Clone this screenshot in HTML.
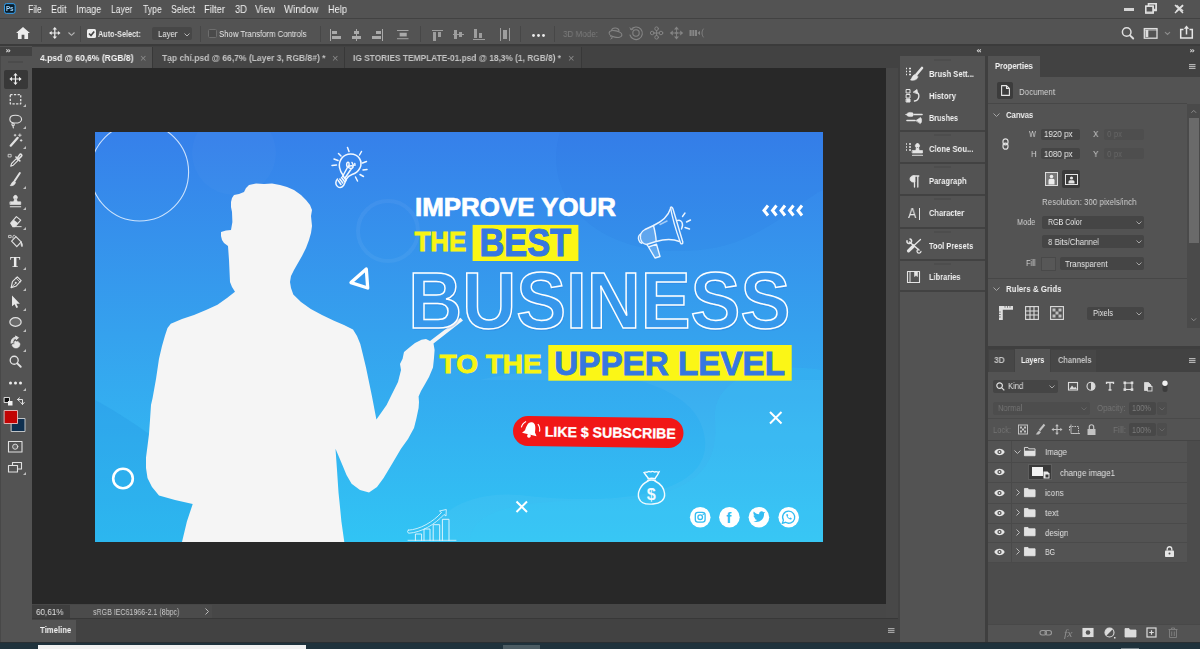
<!DOCTYPE html>
<html lang="en"><head>
<meta charset="utf-8">
<title>Photoshop</title>
<style>
*{box-sizing:border-box;margin:0;padding:0}
html,body{width:1200px;height:649px;overflow:hidden;background:#535353}
body{font-family:"Liberation Sans","DejaVu Sans",sans-serif;font-size:11px;color:#e6e6e6;position:relative}
.a{position:absolute}
.t{position:absolute;white-space:nowrap;line-height:12px;transform-origin:0 50%;transform:scaleX(.85);will-change:transform}
.b{font-weight:bold}
svg{position:absolute;overflow:visible}
#menubar{left:0;top:0;width:1200px;height:18px;background:#535353}
#menubar .t{top:3.200px;font-size:10.5px;color:#f2f2f2}
#optbar{left:0;top:18px;width:1200px;height:28px;background:#535353;border-top:1px solid #424242;border-bottom:2px solid #3b3b3b}
#tabbar{left:0;top:46px;width:898px;height:22px;background:#424242}
#tools{left:0;top:46px;width:32px;height:596px;background:#535353}
#canvas{left:32px;top:68px;width:854px;height:536px;background:#282828}
#status{left:32px;top:604px;width:856px;height:14px;background:#474747}
#timeline{left:32px;top:618px;width:866px;height:24px;background:#424242;border-top:1px solid #383838}
#taskbar{left:0;top:642px;width:1200px;height:7px;background:#1f323c;border-top:1px solid #2a2f33}
#vscroll{left:886px;top:68px;width:12px;height:550px;background:#484848}
#dock{left:0;top:0;width:0;height:0}
.fld{position:absolute;background:#454545;border-radius:2px}
.sep{position:absolute;background:#484848;height:1px}
#optbar > :not(.pg){margin-top:1.700px}
</style>
</head>
<body>
<!-- MENUBAR -->
<div id="menubar" class="a">
<svg style="left:4.300px;top:3.300px;will-change:transform" width="11.600" height="11" viewBox="0 0 12 11"><rect x="0.5" y="0.5" width="11" height="10" rx="2" fill="#0b1f2d" stroke="#31a8ff" stroke-width="1"></rect><text x="2" y="8.2" font-family="Liberation Sans,sans-serif" font-size="6.5" font-weight="bold" fill="#9fd6ff">Ps</text></svg>
<span class="t" style="left: 27.5px; transform: scaleX(0.8096);">File</span>
<span class="t" style="left: 51px; transform: scaleX(0.8566);">Edit</span>
<span class="t" style="left: 76px; transform: scaleX(0.8668);">Image</span>
<span class="t" style="left: 111px; transform: scaleX(0.8109);">Layer</span>
<span class="t" style="left: 142.5px; transform: scaleX(0.8258);">Type</span>
<span class="t" style="left: 171px; transform: scaleX(0.8291);">Select</span>
<span class="t" style="left: 204px; transform: scaleX(0.8996);">Filter</span>
<span class="t" style="left: 234.5px; transform: scaleX(0.893);">3D</span>
<span class="t" style="left: 255px; transform: scaleX(0.8858);">View</span>
<span class="t" style="left: 284px; transform: scaleX(0.9235);">Window</span>
<span class="t" style="left: 328px; transform: scaleX(0.8792);">Help</span>
<!-- window controls -->
<div class="a" style="left:1123.500px;top:8.300px;width:10.500px;height:2.400px;background:#d4d4d4"></div>
<svg style="left:1144.500px;top:3px" width="12" height="10" viewBox="0 0 12 10" fill="none" stroke="#d4d4d4" stroke-width="1.400"><rect x="0.700" y="3.200" width="7.300" height="6"></rect><path d="M3.500 3V0.700H11V6.500H8.200"></path></svg>
<svg style="left:1176px;top:4.500px" width="7.500" height="6.500" viewBox="0 0 7.500 6.500" stroke="#d4d4d4" stroke-width="1.700"><path d="M0.500 0.300L7 6.200M7 0.300L0.500 6.200"></path></svg>
</div>
<svg style="left:1145px;top:3px" width="12" height="11" viewBox="0 0 12 11" fill="none" stroke="#e0e0e0" stroke-width="1.3"><rect x="0.7" y="3.2" width="7.6" height="7"></rect><path d="M3.5 3V0.7H11.3V7.5H8.5"></path></svg>
<svg style="left:1174px;top:4px" width="10" height="10" viewBox="0 0 10 10" stroke="#e0e0e0" stroke-width="1.5"><path d="M1 1L9 9M9 1L1 9"></path></svg>

<!-- OPTIONS BAR -->
<div id="optbar" class="a">
<!-- home -->
<svg style="left:15.500px;top:6.500px" width="14" height="12" viewBox="0 0 15 13"><path d="M7.5 0L0 6.5H2V13H6V8.5H9V13H13V6.5H15Z" fill="#ececec"></path></svg>
<div class="a" style="left:41px;top:5px;width:1px;height:16px;background:#474747"></div>
<!-- move -->
<svg style="left:48.700px;top:6.500px" width="11.600" height="12" viewBox="0 0 13 15" preserveAspectRatio="none" fill="#ececec"><path d="M6.5 0L9 3H7.2V6.8H10V5L13 7.5L10 10V8.2H7.2V12H9L6.5 15L4 12H5.8V8.2H3V10L0 7.5L3 5V6.8H5.8V3H4Z"></path></svg>
<svg style="left:68px;top:11px" width="7" height="4" viewBox="0 0 7 4" fill="none" stroke="#b5b5b5" stroke-width="1.1"><path d="M0.5 0.5L3.5 3.3L6.5 0.5"></path></svg>
<div class="a" style="left:80px;top:5px;width:1px;height:16px;background:#474747"></div>
<!-- checkbox checked -->
<svg style="left:87px;top:8px" width="9" height="9" viewBox="0 0 9 9"><rect width="9" height="9" rx="1.5" fill="#ededed"></rect><path d="M2 4.5L4 6.5L7.2 2.5" stroke="#444" stroke-width="1.6" fill="none"></path></svg>
<span class="t b" style="left: 98px; top: 7px; font-size: 9.5px; color: rgb(232, 232, 232); transform: scaleX(0.7685);">Auto-Select:</span>
<div class="a" style="left:152px;top:6.800px;width:40px;height:12.700px;background:#474747;border-radius:2px"></div>
<span class="t" style="left: 158px; top: 7px; font-size: 9.5px; color: rgb(232, 232, 232); transform: scaleX(0.8205);">Layer</span>
<svg style="left:184px;top:12px" width="6" height="4" viewBox="0 0 6 4" fill="none" stroke="#b5b5b5" stroke-width="1"><path d="M0.5 0.5L3 3L5.5 0.5"></path></svg>
<div class="a" style="left:200px;top:5px;width:1px;height:16px;background:#474747"></div>
<div class="a" style="left:208px;top:8px;width:9px;height:9px;background:#4a4a4a;border:1px solid #6e6e6e;border-radius:1.5px"></div>
<span class="t" style="left: 219px; top: 7px; font-size: 9.5px; color: rgb(232, 232, 232); transform: scaleX(0.8163);">Show Transform Controls</span>
<div class="a" style="left:320px;top:5px;width:1px;height:16px;background:#474747"></div>
<!-- align icons -->
<svg style="left:330px;top:8px" width="12" height="12" viewBox="0 0 12 12" fill="#aaaaaa"><rect x="0" y="0" width="1" height="12"></rect><rect x="2" y="2" width="5" height="3"></rect><rect x="2" y="7" width="9" height="3"></rect></svg>
<svg style="left:351px;top:8px" width="11" height="12" viewBox="0 0 11 12" fill="#aaaaaa"><rect x="5" y="0" width="1" height="12"></rect><rect x="3" y="2" width="5" height="3"></rect><rect x="1" y="7" width="9" height="3"></rect></svg>
<svg style="left:371px;top:8px" width="12" height="12" viewBox="0 0 12 12" fill="#aaaaaa"><rect x="11" y="0" width="1" height="12"></rect><rect x="5" y="2" width="5" height="3"></rect><rect x="1" y="7" width="9" height="3"></rect></svg>
<svg style="left:397px;top:9px" width="11.500" height="9.200" viewBox="0 0 13 10" preserveAspectRatio="none" fill="#aaaaaa"><rect x="0" y="0" width="13" height="1"></rect><rect x="0" y="9" width="13" height="1"></rect><rect x="3" y="3" width="8" height="4"></rect></svg>
<div class="a" style="left:420px;top:5px;width:1px;height:16px;background:#474747"></div>
<svg style="left:432px;top:9px" width="11" height="11" viewBox="0 0 11 11" fill="#9d9d9d"><rect x="0" y="0" width="11" height="1"></rect><rect x="1" y="2" width="3" height="9"></rect><rect x="6" y="2" width="3" height="5"></rect></svg>
<svg style="left:453px;top:8px" width="11" height="11" viewBox="0 0 11 11" fill="#9d9d9d"><rect x="0" y="5" width="11" height="1"></rect><rect x="1" y="1" width="3" height="9"></rect><rect x="6" y="3" width="3" height="5"></rect></svg>
<svg style="left:473px;top:8px" width="12" height="11" viewBox="0 0 12 11" fill="#9d9d9d"><rect x="0" y="10" width="12" height="1"></rect><rect x="1" y="0" width="3" height="9"></rect><rect x="6" y="4" width="3" height="5"></rect></svg>
<svg style="left:500px;top:7px" width="10" height="13" viewBox="0 0 10 13" fill="#9d9d9d"><rect x="0" y="0" width="1" height="13"></rect><rect x="9" y="0" width="1" height="13"></rect><rect x="3" y="2" width="4" height="9"></rect></svg>
<div class="a" style="left:520px;top:5px;width:1px;height:16px;background:#474747"></div>
<svg style="left:532px;top:13px" width="13" height="3" viewBox="0 0 13 3" fill="#ececec"><circle cx="1.5" cy="1.5" r="1.4"></circle><circle cx="6.5" cy="1.5" r="1.4"></circle><circle cx="11.5" cy="1.5" r="1.4"></circle></svg>
<div class="a" style="left:554px;top:5px;width:1px;height:16px;background:#474747"></div>
<span class="t" style="left: 563px; top: 7px; font-size: 9.5px; color: rgb(123, 123, 123); transform: scaleX(0.8498);">3D Mode:</span>
<svg class="pg" style="left:0;top:-19px" width="1200" height="48" viewBox="0 0 1200 48" fill="none" stroke="#858585" stroke-width="1.100" stroke-linecap="round">
<!-- orbit -->
<ellipse cx="615.500" cy="34" rx="6.500" ry="3.200" transform="rotate(12 615.500 34)"></ellipse><path d="M611.500 30.500C612 27.500 618 27 619 30.500"></path><path d="M610.500 36.500L612.500 37.800L610.800 39" stroke-width="0.900"></path>
<!-- roll -->
<circle cx="636" cy="33" r="3.200"></circle><path d="M631 29.500A6.300 6.300 0 1 1 630 35"></path><path d="M630 27.800L631.200 30L633.300 29" stroke-width="0.900"></path>
<!-- pan -->
<g stroke-width="1"><circle cx="656.600" cy="28.700" r="1.800"></circle><circle cx="656.600" cy="37.300" r="1.800"></circle><circle cx="652.200" cy="33" r="1.800"></circle><circle cx="661" cy="33" r="1.800"></circle><path d="M656.600 30.500V35.500M654 33H659.200"></path></g>
<!-- slide -->
<g fill="#858585" stroke="none"><path d="M676.500 26.500L679 29.500H674Z"></path><path d="M676.500 39.500L679 36.500H674Z"></path><path d="M669.800 33L672.800 30.500V35.500Z"></path><path d="M683.200 33L680.200 30.500V35.500Z"></path><circle cx="676.500" cy="33" r="1.300"></circle></g><path d="M676.500 29.500V36.500M672.800 33H680.200" stroke-width="0.900"></path>
<!-- camera -->
<rect x="689.500" y="30" width="7.500" height="6" fill="#858585" stroke="none"></rect><path d="M697.500 33L700 30.800V35.200Z" fill="#858585" stroke="none"></path><path d="M703.300 29C701.500 31.500 701.500 34.500 703.300 37" stroke-width="0.900"></path><path d="M692 30V36M694.500 30V36" stroke="#535353" stroke-width="0.700"></path>
<!-- search -->
<circle cx="1126.700" cy="32" r="4.300" stroke="#dedede" stroke-width="1.500"></circle><path d="M1130 35.300L1133.200 38.500" stroke="#dedede" stroke-width="1.900"></path>
<!-- layout -->
<rect x="1144.300" y="28.600" width="12.700" height="9.600" stroke="#dedede" stroke-width="1.300" stroke-linecap="butt"></rect><rect x="1145.500" y="30" width="2.800" height="7" fill="#dedede" stroke="none"></rect><path d="M1144.300 30H1157" stroke="#dedede" stroke-width="0.800"></path>
<path d="M1165.300 32.300L1167.500 34.400L1169.700 32.300" stroke="#8d8d8d" stroke-width="1.100"></path>
<!-- share -->
<path d="M1183.500 29.500H1180.700V38H1192.300V29.500H1189.500" stroke="#e6e6e6" stroke-width="1.500" stroke-linecap="butt"></path><path d="M1186.500 34.500V27" stroke="#e6e6e6" stroke-width="1.500" stroke-linecap="butt"></path><path d="M1183.800 28.700L1186.500 25.500L1189.200 28.700Z" fill="#e6e6e6" stroke="none"></path>
</svg>
</div>
<!-- TAB BAR -->
<div id="tabbar" class="a">
<div class="a" style="left:32px;top:1px;width:120px;height:21px;background:#535353"></div>
<span class="t b" style="left: 40px; top: 6px; font-size: 9.5px; color: rgb(244, 244, 244); transform: scaleX(0.8965);">4.psd @ 60,6% (RGB/8)</span>
<span class="t" style="left:139.5px;top:6px;font-size:11px;color:#8a8a8a;transform:none">×</span>
<div class="a" style="left:153px;top:1px;width:428px;height:21px;background:#454545"></div>
<div class="a" style="left:152px;top:1px;width:1px;height:21px;background:#383838"></div>
<span class="t b" style="left: 162px; top: 6px; font-size: 9.5px; color: rgb(194, 194, 194); transform: scaleX(0.8962);">Tạp chí.psd @ 66,7% (Layer 3, RGB/8#) *</span>
<span class="t" style="left:331.5px;top:6px;font-size:11px;color:#8a8a8a;transform:none">×</span>
<div class="a" style="left:344px;top:1px;width:1px;height:21px;background:#383838"></div>
<span class="t b" style="left: 353px; top: 6px; font-size: 9.5px; color: rgb(194, 194, 194); transform: scaleX(0.8778);">IG STORIES TEMPLATE-01.psd @ 18,3% (1, RGB/8) *</span>
<span class="t" style="left:567.5px;top:6px;font-size:11px;color:#8a8a8a;transform:none">×</span>
<div class="a" style="left:581px;top:1px;width:1px;height:21px;background:#383838"></div>
</div>
<!-- CANVAS -->
<div id="canvas" class="a">
</div>
<!-- ARTWORK -->
<svg id="art" style="left:95px;top:132px" width="728" height="410" viewBox="95 132 728 410" font-family="Liberation Sans, sans-serif" font-weight="bold">
<defs>
<linearGradient id="bg" x1="0" y1="0" x2="0" y2="1"><stop offset="0" stop-color="#3680ea"></stop><stop offset="0.5" stop-color="#35a2ee"></stop><stop offset="1" stop-color="#31c4f4"></stop></linearGradient>
<clipPath id="cp"><rect x="95" y="132" width="728" height="410"></rect></clipPath>
</defs>
<g clip-path="url(#cp)">
<rect x="95" y="132" width="728" height="410" fill="url(#bg)"></rect>
<!-- subtle blobs -->
<circle cx="234" cy="153" r="42" fill="#ffffff" opacity="0.025"></circle>
<circle cx="388" cy="231" r="30" fill="none" stroke="#ffffff" stroke-width="4" opacity="0.05"></circle>
<path d="M560 132C540 200 600 260 700 250C760 245 800 200 823 190V132Z" fill="#1d4fc0" opacity="0.05"></path>
<path d="M95 400C150 430 200 470 260 542H95Z" fill="#1f8fe0" opacity="0.25"></path>
<path d="M480 380C560 360 700 370 705 440C710 500 600 505 520 495C460 490 430 520 430 542H823V380Z" fill="#ffffff" opacity="0.04"></path>
<path d="M470 542C470 510 520 500 600 500C690 500 720 470 715 420C712 380 760 360 823 370V542Z" fill="#38d0fa" opacity="0.16"></path>
<!-- big circle -->
<circle cx="139.6" cy="172" r="49" fill="none" stroke="#e8f2ff" stroke-width="1.1" opacity="0.85"></circle>
<!-- small circle -->
<circle cx="123" cy="478.5" r="9.8" fill="none" stroke="#ffffff" stroke-width="2.6"></circle>
<!-- PERSON -->
<path id="person" fill="#f5f5f5" d="M249 185L256 183.5L264 184L272 183.5L280 185L287 187L294 190L301 195L306 200L310 205L312 210L311 216L312 226L311 233L309 240L306 248L302 256L298 263L294 270L291 276L290 282L291 288L293.3 294.6L301 302L310.8 309L322 315L334 320.8L344 325L353 329.6L357 336L360.3 344L363 355L366 367.5L369 382L372 396.6L376.4 419.6L381 413L386.6 405L392 394L398 382L401 370L400 364L402.6 358.700L404 352L410 347L415 343L421.5 339.8L426 339L430 341L460.500 317.800L463 320.500L433.500 343.500L434.600 350L434 358L433 367.500L429 377L424.500 385L421 391L418.600 396.600L419 402L418.600 408L416.500 418L414 428L408 439L401 448.700L392 464L383.600 478L377 487L369 492.500L360 490L351.600 483.700L346.500 475L342.800 466L339 457L335.500 448.700L337 470L338.500 492.500L340 507L341.400 521.600L344.300 542L182 542L186.900 521.600L192.700 504L175 500L159 495.400L152 487L147.500 478L146 468L146 457.500L147.500 446L149 434L150 420L151 405L152.600 398L156 379L159 358.700L162 346L165 335.400L167.500 328L170.800 323.700L182 319L194 315L206 310L217.500 304.800L227 298L235 291.700L232 287L230 282L229.500 271L229 260L228.500 253L228 246L224 243L222 240L221 236L221 232L226 230.500L231 230L232.400 222L232 212L231 207L231 202L232 198L234 195L239 194L244 192L246 188Z"></path>
<!-- TEXTS -->
<text x="415.1" y="215.7" font-size="25" fill="#ffffff" stroke="#ffffff" stroke-width="0.700" textLength="200.8" lengthAdjust="spacingAndGlyphs">IMPROVE YOUR</text>
<text x="414.4" y="250.8" font-size="27" fill="#f7f414" stroke="#f7f414" stroke-width="0.800" textLength="52" lengthAdjust="spacingAndGlyphs">THE</text>
<rect x="472.6" y="224.9" width="105.8" height="36.1" fill="#fbf616"></rect>
<text x="479.5" y="256.4" font-size="38.6" fill="#3577e0" stroke="#3577e0" stroke-width="1.100" textLength="91.5" lengthAdjust="spacingAndGlyphs">BEST</text>
<text x="409.3" y="330" font-size="79.6" fill="#1e5fd0" opacity="0.18" textLength="382" lengthAdjust="spacingAndGlyphs">BUSINESS</text>
<text x="408.3" y="328.3" font-size="79.6" fill="#3b9bee" fill-opacity="0.6" stroke="#ffffff" stroke-width="1.5" textLength="382" lengthAdjust="spacingAndGlyphs">BUSINESS</text>
<text x="439.6" y="373.3" font-size="25" fill="#f7f414" stroke="#f7f414" stroke-width="0.800" textLength="102" lengthAdjust="spacingAndGlyphs">TO THE</text>
<rect x="548.3" y="345" width="243.4" height="35.7" fill="#fbf616"></rect>
<text x="554.3" y="375.3" font-size="34" fill="#3577e0" stroke="#3577e0" stroke-width="0.900" textLength="230.7" lengthAdjust="spacingAndGlyphs">UPPER LEVEL</text>
<!-- chevrons -->
<g fill="none" stroke="#ffffff" stroke-width="3" stroke-linejoin="miter"><path d="M768 205.500L764 210.500L768 215.500"></path><path d="M776.500 205.500L772.500 210.500L776.500 215.500"></path><path d="M785 205.500L781 210.500L785 215.500"></path><path d="M793.500 205.500L789.500 210.500L793.500 215.500"></path><path d="M802 205.500L798 210.500L802 215.500"></path></g>
<!-- triangle -->
<path d="M366.300 269L351 282.600L367.700 288Z" fill="none" stroke="#ffffff" stroke-width="3.300" stroke-linejoin="round"></path>
<!-- x marks -->
<path d="M770 412L781.500 423.500M781.500 412L770 423.500M516.500 501.500L527 512M527 501.500L516.500 512" stroke="#ffffff" stroke-width="2" fill="none"></path>
<!-- subscribe button -->
<g transform="rotate(0.85 598 432)">
<rect x="513" y="417" width="170.500" height="30" rx="15" fill="#f11717"></rect>
<text x="544.8" y="437.400" font-size="14.3" fill="#ffffff" stroke="#ffffff" stroke-width="0.300" textLength="131" lengthAdjust="spacingAndGlyphs">LIKE $ SUBSCRIBE</text>
<g transform="translate(530.300 431) rotate(12) scale(.93)" fill="#ffffff"><path d="M0 -8.500C-4.500 -8.500 -5 -3 -5.500 1.500L-8 5H8L5.500 1.500C5 -3 4.500 -8.500 0 -8.500Z"></path><circle cx="0" cy="6.500" r="2"></circle><path d="M-6.500 -8C-9 -6 -10 -3 -10 -0.500M6.500 -8C9 -6 10 -3 10 -0.500" fill="none" stroke="#ffffff" stroke-width="1.200"></path></g>
</g>
<!-- social -->
<g fill="#ffffff"><circle cx="700.2" cy="517.2" r="10.3"></circle><circle cx="729.400" cy="517.2" r="10.3"></circle><circle cx="758.900" cy="517.2" r="10.3"></circle><circle cx="788.700" cy="517.2" r="10.3"></circle></g>
<g fill="none" stroke="#33bdf2" stroke-width="1.300"><rect x="695.300" y="512.300" width="9.800" height="9.800" rx="2.600"></rect><circle cx="700.2" cy="517.2" r="2.300"></circle></g>
<circle cx="703.200" cy="514.300" r="0.800" fill="#33bdf2"></circle>
<text x="726.300" y="523.300" font-size="15" fill="#33bdf2">f</text>
<path d="M753.500 521.500C759.500 523.500 764.500 519 764 513.500L765.200 512L763.600 512.300C762 510.300 758.700 511.500 759.200 514.300C756.800 514.200 755 513 753.800 511.500C753 513 753.500 514.800 754.700 515.600L753.500 515.400C753.600 516.800 754.500 517.800 755.800 518.200L754.700 518.300C755.100 519.300 756 520 757.200 520.100C756.200 521 754.900 521.500 753.500 521.500Z" fill="#33bdf2"></path>
<g><path d="M788.700 511.200A6 6 0 1 1 785.600 522.300L782.400 523.300L783.400 520.200A6 6 0 0 1 788.700 511.200Z" fill="none" stroke="#33bdf2" stroke-width="1.300"></path><path d="M786.300 514.300C786 516.800 788.800 519.800 791.300 519.600L791.800 518.300L790.200 517.500L789.600 518.200C788.700 517.800 788 517.100 787.600 516.200L788.300 515.600L787.500 514Z" fill="#33bdf2"></path></g>
<!-- money bag -->
<g fill="none" stroke="#f2fbff" stroke-width="1.400" stroke-linecap="round"><path d="M648 481C640 485 637 493 639 498.500C641 504 648 504.500 653 504C660 503.500 665.500 500 664.500 493C663.800 488 660 483.500 655 481"></path><path d="M647.500 480.800C650 479.800 653 479.800 655.500 480.800M648 478.800C650.500 478 653 478 655.200 478.800"></path><path d="M648.500 478.500C646.500 476 645 474 644 472.500C645.500 471.500 646.800 472.800 648 471.800C649.200 470.800 650 472.500 651.500 471.600C652.800 470.800 654 472.500 655.300 471.800C656.500 471.200 657.500 472.500 659 472C658 474.500 656.500 476.500 655 478.500"></path></g>
<text x="646.800" y="499.500" font-size="16" fill="#f2fbff" textLength="9" lengthAdjust="spacingAndGlyphs">$</text>
<!-- bulb -->
<g fill="none" stroke="#f2f8ff" stroke-width="1.500" stroke-linecap="round"><path d="M343.500 176C339.500 171 337.500 164 341.500 158.500C346 152.500 355.500 152.500 359.500 158.500C363.500 165 359 172.500 352 174.500C349 175.500 347.500 177 345.800 179.800"></path><path d="M343.300 176.200L346 180M341.500 177.500L344.500 181.500M339.800 179L342.800 183M338.200 180.500L341 184.500"></path><path d="M337.500 179C335.500 181 335 184.500 337.500 186.500C339.500 188 342 187.500 343.500 185.500L346.200 180"></path><path d="M342.500 176.500L348 166.500M345 178L351.500 168.500M347.200 166.800C346 164.500 346.800 162 348.200 162.300C349.500 162.600 349.300 165 348.300 166.800C350.500 165 353.500 165.500 353 167.200C352.500 168.800 350 168.800 348.500 167.500M352 162.500L353.500 165.500M354.800 163.500L355 165.300"></path><path d="M347.500 147.500L349 151.500M338.500 153.500L341 156M334 159L338 160.500M332 165.500L336.500 165M361.500 151.500L359.500 155M366.500 161.500L362.500 163M367 169.500L363 170M363.500 176.500L360 174.500M357.500 181L355.500 177"></path></g>
<!-- megaphone -->
<g fill="none" stroke="#eaf4ff" stroke-width="1.400" stroke-linecap="round" stroke-linejoin="round"><path d="M670.500 207.500C671.500 206.500 672.500 207.500 673 209L682.800 242C683 244 681.500 244.500 680.500 243C676.500 232 672.500 219 670.500 207.500Z"></path><path d="M670.500 208.500C668 217 660 222.500 653.500 225.500L645 229.500C641.500 231.500 640 234.500 640.500 238C641 241.500 643 244 646.500 244.500L656 241.500C663 239.500 672 238.500 679.500 241.500"></path><path d="M653.500 225.500C655 231.500 656 236.500 656.200 241.500"></path><path d="M640.500 234C638.500 235.500 638 238 639 240.500C639.500 242 640.500 243 641.800 243.200"></path><path d="M647 244.500L648.500 247L656.500 244.200M648.500 247L655 258L660 256.500L656.500 244.200"></path><path d="M677.500 220.500C681.500 219 684 224 681.500 229"></path><path d="M682.500 216.500L685 213M686.500 222L690.500 220M685 227.500L689.500 229"></path><path d="M660 224.500L667 221" stroke-opacity="0.6"></path></g>
<g fill="#ffffff" opacity="0.22"><path d="M645 229.500L653.500 225.500C655 231.500 656 236.500 656.200 241.500L646.500 244.500C641 243 639 234 645 229.500Z"></path><path d="M648.500 247L656.500 244.200L660 256.500L655 258Z"></path></g>
<!-- chart -->
<g fill="none" stroke="#e8f8ff" stroke-width="1" opacity="0.92" stroke-linecap="round" stroke-linejoin="round"><path d="M415.400 540.500V534H421.600V540.500M424 540.500V529H430V540.500M433.200 540.500V524.700H439.700V540.500M442.400 540.500V519.300H449V540.500"></path><path d="M408 540.300H456" stroke-width="0.800"></path><path d="M408.300 530.200C420 529.500 433 522 441.500 512.500L439.500 511L446.300 509.500L446 516L444 514.500C435 524.500 421 532.500 409 533.200C407.300 533.200 407 530.400 408.300 530.200Z" stroke-width="0.900"></path></g>
</g>
</svg>
<!-- TOOLS -->
<div id="tools" class="a">
<div class="a" style="left:0;top:1px;width:32px;height:9px;background:#424242"></div>
<svg style="left:5.800px;top:3.200px" width="4.200" height="3.500" viewBox="0 0 6 5" fill="none" stroke="#d8d8d8" stroke-width="1.500"><path d="M0.500 0.500L2.500 2.500L0.500 4.500M3.500 0.500L5.500 2.500L3.500 4.500"></path></svg>
<div class="a" style="left:8px;top:15px;width:15px;height:2px;background:#4b4b4b"></div>
<!-- active tool -->
<div class="a" style="left:4px;top:24px;width:24px;height:19px;background:#383838;border-radius:2px"></div>
<svg style="left:0;top:0" width="32" height="440" viewBox="0 46 32 440" fill="none" stroke="#e2e2e2" stroke-width="1.300" stroke-linecap="round" stroke-linejoin="round">
<!-- move 79 -->
<g transform="translate(15.5 79.0) scale(0.87) translate(-15.5 -79.0)"><path d="M15.500 72L18 75H16.200V78.300H19.500V76.500L22.500 79L19.500 81.500V79.700H16.200V83H18L15.500 86L13 83H14.800V79.700H11.500V81.500L8.500 79L11.500 76.500V78.300H14.800V75H13Z" fill="#f0f0f0" stroke="none"></path></g>
<!-- marquee 99.500 -->
<g transform="translate(15.5 99.5) scale(0.87) translate(-15.5 -99.5)"><rect x="9.500" y="94" width="12" height="10.500" stroke-dasharray="2.600 1.600" stroke-linecap="butt" stroke-width="1.500"></rect></g>
<!-- lasso 120 -->
<g transform="translate(15.5 120.0) scale(0.87) translate(-15.5 -120.0)"><path d="M15.500 114.500C19.500 114.500 22.500 116.500 22.500 119C22.500 121.500 19.500 123.500 15.500 123.500C11.500 123.500 9 121.500 9 119C9 116.500 11.500 114.500 15.500 114.500Z"></path><path d="M12.500 123C11 124 11 126 12.500 126.500C14 127 14.500 125 13.500 124M12.500 126.500L13 129"></path></g>
<!-- wand 140 -->
<g transform="translate(15.5 140.0) scale(0.87) translate(-15.5 -140.0)"><path d="M10 146.500L18 137.500" stroke-width="2.600"></path><path d="M20.500 133V136M19 134.500H22M22 139.500V141.500M21 140.500H23M15 133.500V135.500M14 134.500H16" stroke-width="1"></path></g>
<!-- eyedropper 160 -->
<g transform="translate(15.5 160.0) scale(0.87) translate(-15.5 -160.0)"><path d="M10 167L11 164L16.500 158.500L18.500 160.500L13 166Z"></path><path d="M16 156.500L20.500 161M17.500 158L20.500 153.500C21.500 152.500 23.500 154.500 22.500 155.500L19 159" stroke-width="1.800"></path><path d="M7.500 153.500H10.500V156.500H7.500Z" stroke-width="0.900"></path></g>
<!-- brush 180 -->
<g transform="translate(15.5 180.0) scale(0.87) translate(-15.5 -180.0)"><path d="M20.500 172L14.500 181" stroke-width="2.200"></path><path d="M13.500 181.500C11.500 182 11 184.500 9.500 186.500C12.500 187 15 185.500 15.500 183Z" fill="#e2e2e2" stroke-width="0.800"></path></g>
<!-- stamp 201 -->
<g transform="translate(15.5 201.0) scale(0.87) translate(-15.5 -201.0)"><path d="M15.500 194.500A2.300 2.300 0 1 1 15.400 194.500M14.500 198.500L13.500 202H17.500L16.500 198.500M9.500 202H21.500V205H9.500Z" fill="#e2e2e2" stroke-width="0.800"></path><path d="M9.500 207.500H21.500" stroke-width="1.200"></path></g>
<!-- eraser 221 -->
<g transform="translate(15.5 221.0) scale(0.87) translate(-15.5 -221.0)"><path d="M10 223.500L16.500 216L21.500 220L15 227.500H12.500Z"></path><path d="M13.500 219.500L18.500 223.500L15 227.500H12.500L10 223.500Z" fill="#e2e2e2" stroke="none"></path><path d="M16 227.500H22" stroke-width="1.100"></path></g>
<!-- bucket 241.500 -->
<g transform="translate(15.5 241.5) scale(0.87) translate(-15.5 -241.5)"><path d="M11 241L16 236L22 242L17 247.500Z"></path><path d="M16 236C14.500 233.500 12 233.500 12.500 237.500" stroke-width="1"></path><path d="M22 242C23.500 244 24 246 23 247.500C22 246.500 21.500 244.500 22 242Z" fill="#e2e2e2" stroke-width="0.800"></path><path d="M8 234.500H10.500V237H8Z" stroke-width="0.900"></path></g>
<!-- pen 282 -->
<g transform="translate(15.5 282.0) scale(0.87) translate(-15.5 -282.0)"><path d="M10.500 288.500L12 281.500L17.500 276L22 280.500L16.500 286.500Z"></path><path d="M10.500 288.500L15 284" stroke-width="1"></path><circle cx="15.800" cy="283" r="1.200" fill="#e2e2e2" stroke="none"></circle><path d="M16 277.500L20.500 282" stroke-width="1"></path></g>
<!-- arrow 302 -->
<g transform="translate(15.5 302.0) scale(0.87) translate(-15.5 -302.0)"><path d="M11.500 294.500V307L14.500 304.500L16.500 309L18.500 308L16.500 304H20.500Z" fill="#e8e8e8" stroke="none"></path></g>
<!-- ellipse 322 -->
<g transform="translate(15.5 322.0) scale(0.87) translate(-15.5 -322.0)"><ellipse cx="15.500" cy="322" rx="6.500" ry="5" fill="#6a6a6a" stroke-width="1.400"></ellipse></g>
<!-- hand/rotate 342 -->
<g transform="translate(15.5 342.0) scale(0.87) translate(-15.5 -342.0)"><path d="M10.500 343.500C10 339 13 336.500 16 336.500L15.500 335L19 337L16.500 339.500L16.300 338C14 338 12 340 12.500 343" stroke-width="1" fill="#e2e2e2"></path><path d="M12 346.500C11 344.500 13 343.500 14 345L14.500 341.500C15 340.500 16.500 341 16.300 342L17.500 341.500C18.500 341 19.500 342 19 343C20.500 342.500 21 344 20.500 345.500C20 348 18 349 16 349C14 349 13 348 12 346.500Z" fill="#e2e2e2" stroke-width="0.600"></path></g>
<!-- zoom 362 -->
<g transform="translate(15.5 362.0) scale(0.87) translate(-15.5 -362.0)"><circle cx="14" cy="360" r="4.600" stroke-width="1.500"></circle><path d="M17.500 363.500L21.500 367.500" stroke-width="2.200"></path></g>
<!-- dots 383 -->
<g fill="#ececec" stroke="none"><circle cx="10.500" cy="383" r="1.500"></circle><circle cx="15.500" cy="383" r="1.500"></circle><circle cx="20.500" cy="383" r="1.500"></circle></g>
<!-- small corner triangles -->
<g fill="#bdbdbd" stroke="none"><path d="M26 104v3h-3z"></path><path d="M26 126v3h-3z"></path><path d="M26 146v3h-3z"></path><path d="M26 186v3h-3z"></path><path d="M26 207v3h-3z"></path><path d="M26 227v3h-3z"></path><path d="M26 267v3h-3z"></path><path d="M26 288v3h-3z"></path><path d="M26 308v3h-3z"></path><path d="M26 329v3h-3z"></path><path d="M26 349v3h-3z"></path><path d="M26 388v3h-3z"></path><path d="M26 472v3h-3z"></path></g>
<!-- default colors / swap -->
<rect x="4.500" y="397.500" width="5" height="5" fill="#111" stroke="#e8e8e8" stroke-width="0.900"></rect><rect x="8" y="401" width="4.500" height="4.500" fill="#f0f0f0" stroke="none"></rect>
<path d="M18.500 399.500H22.500V403.500M17.500 399.500L19.500 397.800M17.500 399.500L19.500 401.200M22.500 404.500L20.800 402.500M22.500 404.500L24.200 402.500" stroke-width="1"></path>
<!-- bg/fg -->
<rect x="11.500" y="418.500" width="13.500" height="13" fill="#0e2f4f" stroke="#bfc3c6" stroke-width="1"></rect>
<rect x="4.500" y="410.500" width="13" height="13" fill="#c30404" stroke="#e0b0b0" stroke-width="1"></rect>
<!-- quick mask -->
<rect x="8.500" y="441.500" width="13.500" height="10.500" stroke-width="1.100"></rect><circle cx="15.200" cy="446.700" r="2.600" fill="#666" stroke-width="0.900"></circle>
<!-- screen mode -->
<rect x="12.500" y="462.500" width="9" height="6.500" stroke-width="1.100"></rect><rect x="8.500" y="465.500" width="9" height="6.500" fill="#535353" stroke-width="1.100"></rect>
</svg>
<span class="t b" style="left:10.200px;top:206.300px;font-size:15.500px;line-height:20px;font-family:'Liberation Serif',serif;color:#ececec;transform:none">T</span>
</div>
<div class="a" style="left:0;top:56px;width:1px;height:586px;background:#484848"></div>
<!-- STATUS -->
<div id="status" class="a">
<div class="a" style="left:0;top:1px;width:38px;height:13px;background:#3e3e3e"></div>
<div class="a" style="left:38px;top:1px;width:142px;height:13px;background:#4b4b4b"></div>
<span class="t" style="left: 4.3px; top: 1.5px; font-size: 9.5px; color: rgb(224, 224, 224); transform: scaleX(0.8531);">60,61%</span>
<span class="t" style="left: 60.5px; top: 1.5px; font-size: 9.5px; color: rgb(201, 201, 201); transform: scaleX(0.7429);">sRGB IEC61966-2.1 (8bpc)</span>
<svg style="left:173px;top:4px" width="4" height="7" viewBox="0 0 4 7" fill="none" stroke="#bdbdbd" stroke-width="1"><path d="M0.500 0.500L3.500 3.500L0.500 6.500"></path></svg>
</div>
<div id="vscroll" class="a"></div>
<!-- TIMELINE -->
<div id="timeline" class="a">
<div class="a" style="left:0;top:1px;width:44px;height:23px;background:#535353"></div>
<span class="t b" style="left: 7.5px; top: 4.8px; font-size: 9.5px; color: rgb(244, 244, 244); transform: scaleX(0.8156);">Timeline</span>
<svg style="left:856px;top:9.300px" width="6.500" height="5" viewBox="0 0 6.500 5" stroke="#a4a4a4" stroke-width="1.100"><path d="M0 0.600H6.500M0 2.500H6.500M0 4.400H6.500"></path></svg>
</div>
<!-- DOCK -->
<div id="dock" class="a">
<div class="a" style="left:898px;top:46px;width:302px;height:596px;background:#535353"></div>
<div class="a" style="left:898px;top:46px;width:302px;height:10px;background:#424242"></div>
<div class="a" style="left:898px;top:46px;width:2px;height:596px;background:#424242"></div>
<div class="a" style="left:985px;top:56px;width:3px;height:586px;background:#3f3f3f"></div>
<svg style="left:976.800px;top:49px" width="4.200" height="3.500" viewBox="0 0 6 5" fill="none" stroke="#d0d0d0" stroke-width="1.500"><path d="M2.500 0.500L0.500 2.500L2.500 4.500M5.500 0.500L3.500 2.500L5.500 4.500"></path></svg>
<svg style="left:1190px;top:49px" width="4.200" height="3.500" viewBox="0 0 6 5" fill="none" stroke="#d0d0d0" stroke-width="1.500"><path d="M0.500 0.500L2.500 2.500L0.500 4.500M3.500 0.500L5.500 2.500L3.500 4.500"></path></svg>
<div class="a" style="left:900px;top:130px;width:85px;height:2px;background:#424242"></div>
<div class="a" style="left:900px;top:162px;width:85px;height:2px;background:#424242"></div>
<div class="a" style="left:900px;top:194px;width:85px;height:2px;background:#424242"></div>
<div class="a" style="left:900px;top:227px;width:85px;height:2px;background:#424242"></div>
<div class="a" style="left:900px;top:259px;width:85px;height:2px;background:#424242"></div>
<div class="a" style="left:900px;top:290px;width:85px;height:2px;background:#424242"></div>
<div class="a" style="left:934px;top:59px;width:17px;height:2px;background:#4d4d4d"></div>
<div class="a" style="left:934px;top:134px;width:17px;height:2px;background:#4d4d4d"></div>
<div class="a" style="left:934px;top:166px;width:17px;height:2px;background:#4d4d4d"></div>
<div class="a" style="left:934px;top:198px;width:17px;height:2px;background:#4d4d4d"></div>
<div class="a" style="left:934px;top:231px;width:17px;height:2px;background:#4d4d4d"></div>
<div class="a" style="left:934px;top:263px;width:17px;height:2px;background:#4d4d4d"></div>
<span class="t b" style="left: 929.3px; top: 67.8px; font-size: 9.5px; color: rgb(240, 240, 240); transform: scaleX(0.8042);">Brush Sett...</span>
<span class="t b" style="left: 929.3px; top: 90px; font-size: 9.5px; color: rgb(240, 240, 240); transform: scaleX(0.8248);">History</span>
<span class="t b" style="left: 929.3px; top: 111.7px; font-size: 9.5px; color: rgb(240, 240, 240); transform: scaleX(0.7628);">Brushes</span>
<span class="t b" style="left: 929.3px; top: 143.2px; font-size: 9.5px; color: rgb(240, 240, 240); transform: scaleX(0.8089);">Clone Sou...</span>
<span class="t b" style="left: 929.3px; top: 175.3px; font-size: 9.5px; color: rgb(240, 240, 240); transform: scaleX(0.7979);">Paragraph</span>
<span class="t b" style="left: 929.3px; top: 207.4px; font-size: 9.5px; color: rgb(240, 240, 240); transform: scaleX(0.789);">Character</span>
<span class="t b" style="left: 929.3px; top: 239.8px; font-size: 9.5px; color: rgb(240, 240, 240); transform: scaleX(0.7882);">Tool Presets</span>
<span class="t b" style="left: 929.3px; top: 271.2px; font-size: 9.5px; color: rgb(240, 240, 240); transform: scaleX(0.7847);">Libraries</span>
<svg style="left:0;top:0" width="1200" height="649" viewBox="0 0 1200 649" fill="none" stroke="#e4e4e4" stroke-width="1.200" stroke-linecap="round" stroke-linejoin="round">
<!-- brush settings -->
<path d="M906 68.500H907M909 68.500H911M906 71.500H907M909 71.500H911M906 74.500H907M909 74.500H911" stroke-width="1.300" stroke-linecap="butt"></path>
<path d="M922 68L916.500 74.500" stroke-width="2.600"></path><path d="M915 74.500C912.500 75 912.500 77.500 910.500 80C914 81 917.500 79.500 918 76.800Z" fill="#e4e4e4" stroke-width="0.600"></path>
<!-- history -->
<rect x="906.500" y="89.500" width="3.500" height="3.500" stroke-width="1"></rect><rect x="906.500" y="94.500" width="3.500" height="3.500" stroke-width="1"></rect><rect x="906.500" y="99" width="3.500" height="3" fill="#e4e4e4" stroke-width="1"></rect>
<path d="M914.500 101C919.500 100 920.500 94 916 91.500" stroke-width="1.400"></path><path d="M913.500 92L917 89.500L917.500 93.500Z" fill="#e4e4e4" stroke-width="0.800"></path>
<!-- brushes -->
<path d="M914 114.500H922" stroke-width="1.600"></path><path d="M906 114.500C908 112 911 112 913 113V116C911 117 908 117 906 114.500Z" fill="#e4e4e4" stroke-width="0.600"></path>
<path d="M907 120.500H915" stroke-width="1.600"></path><path d="M916 120.500L920.500 117.500C922 118.500 922 122.500 920.500 123.500Z" fill="#e4e4e4" stroke-width="0.600"></path>
<!-- clone source -->
<path d="M906 144H907M909 144H911M906 147H907M909 147H911M906 150H907M909 150H911" stroke-width="1.300" stroke-linecap="butt"></path>
<path d="M917.500 143.500A2.200 2.200 0 1 1 917.400 143.500M916.500 147L915.800 150.500H919.200L918.500 147M912.500 150.500H922.500V153H912.500Z" fill="#e4e4e4" stroke-width="0.700"></path><path d="M912.500 155.300H922.500" stroke-width="1.100"></path>
<!-- paragraph -->
<path d="M914.500 176V187M917.800 176V187M918.800 176H913" stroke-width="1.300"></path><path d="M914.500 176H913C909 176 909 182 913 182H914.500Z" fill="#e4e4e4" stroke-width="0.800"></path>
<!-- tool presets -->
<path d="M909.500 242L919 250" stroke-width="1.600"></path><path d="M907 240.800A2.300 2.300 0 1 0 910 239" stroke-width="1.500"></path><path d="M918.300 249.300A2 2 0 1 0 921 251.300" stroke-width="1.300"></path><path d="M920.500 239.500L914 245.500" stroke-width="1.300"></path><path d="M913.500 246L908.500 250.800" stroke-width="3.200"></path>
<!-- libraries -->
<rect x="907.500" y="271.500" width="12" height="11" stroke-width="1.100"></rect><path d="M910 271.500V282.500" stroke-width="1"></path><path d="M914.500 272V276.500L916 275.500L917.500 276.500V272Z" fill="#e4e4e4" stroke-width="0.600"></path>
</svg>
<span class="t" style="left:907.500px;top:205px;font-size:14px;line-height:16px;color:#e4e4e4;transform:scaleX(.9)">A</span>
<div class="a" style="left:918.500px;top:207.500px;width:1.200px;height:12px;background:#e4e4e4"></div>
<div class="a" style="left:988px;top:56px;width:212px;height:21px;background:#424242"></div>
<div class="a" style="left:988px;top:56px;width:52px;height:21px;background:#535353"></div>
<span class="t b" style="left: 995.4px; top: 59.5px; font-size: 9.5px; color: rgb(244, 244, 244); transform: scaleX(0.7979);">Properties</span>
<svg style="left:1189.300px;top:63.700px" width="6.500" height="5" viewBox="0 0 6.500 5" stroke="#b4b4b4" stroke-width="1.100"><path d="M0 0.600H6.500M0 2.500H6.500M0 4.400H6.500"></path></svg>
<div class="a" style="left:997px;top:82px;width:16px;height:17px;background:#3c3c3c;border-radius:2px"></div>
<svg style="left:1001px;top:85px" width="9" height="11" viewBox="0 0 9 11" fill="none" stroke="#e6e6e6" stroke-width="1.1" stroke-linejoin="round"><path d="M0.600 0.600H5.500L8.400 3.500V10.400H0.600ZM5.500 0.600V3.500H8.400"></path></svg>
<span class="t" style="left: 1018.6px; top: 85.8px; font-size: 9.5px; color: rgb(210, 210, 210); transform: scaleX(0.8312);">Document</span>
<div class="sep" style="left:988px;top:103px;width:199px;background:#474747"></div>
<div class="a" style="left:1187px;top:104px;width:13px;height:224px;background:#4a4a4a"></div>
<div class="a" style="left:1189px;top:118px;width:10px;height:125px;background:#6a6a6a"></div>
<svg style="left:1191px;top:109.500px" width="5.500" height="3.200" viewBox="0 0 7 4" fill="none" stroke="#8e8e8e" stroke-width="1.200"><path d="M0.500 3.500L3.500 0.500L6.500 3.500"></path></svg>
<svg style="left:1191px;top:318px" width="5.500" height="3.200" viewBox="0 0 7 4" fill="none" stroke="#8e8e8e" stroke-width="1.200"><path d="M0.500 0.500L3.500 3.500L6.500 0.500"></path></svg>
<svg style="left:993px;top:113px" width="7" height="4" viewBox="0 0 7 4" fill="none" stroke="#a5a5a5" stroke-width="1"><path d="M0.500 0.500L3.500 3.500L6.500 0.500"></path></svg>
<span class="t b" style="left: 1006.2px; top: 109.2px; font-size: 9.5px; color: rgb(240, 240, 240); transform: scaleX(0.8044);">Canvas</span>
<span class="t" style="left: 1029.2px; top: 128px; font-size: 9.5px; color: rgb(208, 208, 208); transform: scaleX(0.7805);">W</span>
<div class="fld" style="left:1040.500px;top:128.500px;width:39.500px;height:11.500px"></div>
<span class="t" style="left: 1043.7px; top: 128.2px; font-size: 9.5px; color: rgb(232, 232, 232); transform: scaleX(0.8458);">1920 px</span>
<span class="t" style="left: 1093px; top: 128px; font-size: 9.5px; color: rgb(200, 200, 200); transform: scaleX(0.867);">X</span>
<div class="fld" style="left:1103.500px;top:128.500px;width:40.500px;height:11.500px;background:#4e4e4e"></div>
<span class="t" style="left: 1107px; top: 128.2px; font-size: 9.5px; color: rgb(103, 103, 103); transform: scaleX(0.8348);">0 px</span>
<span class="t" style="left: 1031px; top: 147.5px; font-size: 9.5px; color: rgb(208, 208, 208); transform: scaleX(0.8);">H</span>
<div class="fld" style="left:1040.500px;top:147.500px;width:39.500px;height:11.500px"></div>
<span class="t" style="left: 1043.7px; top: 147.5px; font-size: 9.5px; color: rgb(232, 232, 232); transform: scaleX(0.8458);">1080 px</span>
<span class="t" style="left: 1093px; top: 147.5px; font-size: 9.5px; color: rgb(200, 200, 200); transform: scaleX(0.867);">Y</span>
<div class="fld" style="left:1103.500px;top:147.500px;width:40.500px;height:11.500px;background:#4e4e4e"></div>
<span class="t" style="left: 1107px; top: 147.5px; font-size: 9.5px; color: rgb(103, 103, 103); transform: scaleX(0.8348);">0 px</span>
<svg style="left:1002px;top:138px" width="7" height="12" viewBox="0 0 7 12" fill="none" stroke="#e0e0e0" stroke-width="1.200"><rect x="1" y="0.800" width="5" height="6" rx="2.500"></rect><rect x="1" y="5.200" width="5" height="6" rx="2.500"></rect></svg>
<svg style="left:1045px;top:172px" width="13" height="14" viewBox="0 0 13 14"><rect x="0.500" y="0.500" width="12" height="13" fill="#777" stroke="#dcdcdc"></rect><circle cx="6.500" cy="4.500" r="1.800" fill="#ececec"></circle><path d="M3.500 12.500V8.500C3.500 7 4.500 6.800 6.500 6.800C8.500 6.800 9.500 7 9.500 8.500V12.500Z" fill="#ececec"></path></svg>
<div class="a" style="left:1062px;top:170px;width:18px;height:18px;background:#3a3a3a;border-radius:2px"></div>
<svg style="left:1065px;top:174px" width="13" height="11" viewBox="0 0 13 11"><rect x="0.500" y="0.500" width="12" height="10" fill="#3a3a3a" stroke="#e4e4e4"></rect><circle cx="6.500" cy="4" r="1.600" fill="#e4e4e4"></circle><path d="M3.500 9.500V8C3.500 6.500 4.500 6.300 6.500 6.300C8.500 6.300 9.500 6.500 9.500 8V9.500Z" fill="#e4e4e4"></path></svg>
<span class="t" style="left: 1041.5px; top: 196.2px; font-size: 9.5px; color: rgb(207, 207, 207); transform: scaleX(0.8362);">Resolution: 300 pixels/inch</span>
<span class="t" style="left: 1016.9px; top: 215.8px; font-size: 9.5px; color: rgb(207, 207, 207); transform: scaleX(0.7658);">Mode</span>
<div class="fld" style="left:1041.500px;top:216px;width:102.500px;height:13px"></div>
<span class="t" style="left: 1047.5px; top: 216.2px; font-size: 9.5px; color: rgb(228, 228, 228); transform: scaleX(0.7401);">RGB Color</span>
<svg style="left:1136px;top:221px" width="6" height="4" viewBox="0 0 6 4" fill="none" stroke="#a5a5a5" stroke-width="1"><path d="M0.500 0.500L3 3L5.500 0.500"></path></svg>
<div class="fld" style="left:1041.500px;top:235px;width:102.500px;height:13px"></div>
<span class="t" style="left: 1047.5px; top: 235.8px; font-size: 9.5px; color: rgb(228, 228, 228); transform: scaleX(0.8253);">8 Bits/Channel</span>
<svg style="left:1136px;top:240px" width="6" height="4" viewBox="0 0 6 4" fill="none" stroke="#a5a5a5" stroke-width="1"><path d="M0.500 0.500L3 3L5.500 0.500"></path></svg>
<span class="t" style="left: 1025.7px; top: 257.4px; font-size: 9.5px; color: rgb(207, 207, 207); transform: scaleX(0.7825);">Fill</span>
<div class="a" style="left:1041px;top:257px;width:14.500px;height:13.500px;background:#575757;border:1px solid #494949"></div>
<div class="fld" style="left:1059.500px;top:257px;width:84.500px;height:13px"></div>
<span class="t" style="left: 1065px; top: 257.6px; font-size: 9.5px; color: rgb(228, 228, 228); transform: scaleX(0.8354);">Transparent</span>
<svg style="left:1136px;top:262px" width="6" height="4" viewBox="0 0 6 4" fill="none" stroke="#a5a5a5" stroke-width="1"><path d="M0.500 0.500L3 3L5.500 0.500"></path></svg>
<div class="sep" style="left:988px;top:278px;width:199px;background:#474747"></div>
<svg style="left:993px;top:287px" width="7" height="4" viewBox="0 0 7 4" fill="none" stroke="#a5a5a5" stroke-width="1"><path d="M0.500 0.500L3.500 3.500L6.500 0.500"></path></svg>
<span class="t b" style="left: 1006.2px; top: 282.8px; font-size: 9.5px; color: rgb(240, 240, 240); transform: scaleX(0.8342);">Rulers &amp; Grids</span>
<svg style="left:999px;top:306px" width="14" height="14" viewBox="0 0 14 14"><path d="M0 0H14V3.800H3.800V14H0Z" fill="#dedede"></path><path d="M6 0V1.800M8.500 0V1.800M11 0V1.800M0 6H1.800M0 8.500H1.800M0 11H1.800" stroke="#535353" stroke-width="0.700"></path></svg>
<svg style="left:1025px;top:306px" width="14" height="14" viewBox="0 0 14 14" fill="none" stroke="#dedede" stroke-width="1.100"><rect x="0.600" y="0.600" width="12.800" height="12.800"></rect><path d="M5 0.600V13.400M9 0.600V13.400M0.600 5H13.400M0.600 9H13.400"></path></svg>
<svg style="left:1050px;top:306px" width="14" height="14" viewBox="0 0 14 14"><rect x="0.600" y="0.600" width="12.800" height="12.800" fill="none" stroke="#dedede" stroke-width="1.100"></rect><g fill="#bdbdbd"><rect x="2.500" y="2.500" width="3" height="3"></rect><rect x="8.500" y="2.500" width="3" height="3"></rect><rect x="5.500" y="5.500" width="3" height="3"></rect><rect x="2.500" y="8.500" width="3" height="3"></rect><rect x="8.500" y="8.500" width="3" height="3"></rect></g></svg>
<div class="fld" style="left:1086.500px;top:306.500px;width:57.500px;height:13px"></div>
<span class="t" style="left: 1092.7px; top: 307.2px; font-size: 9.5px; color: rgb(228, 228, 228); transform: scaleX(0.7891);">Pixels</span>
<svg style="left:1136px;top:312px" width="6" height="4" viewBox="0 0 6 4" fill="none" stroke="#a5a5a5" stroke-width="1"><path d="M0.500 0.500L3 3L5.500 0.500"></path></svg>
<div class="a" style="left:988px;top:346px;width:212px;height:3px;background:#3f3f3f"></div>
<div class="a" style="left:988px;top:349px;width:212px;height:23px;background:#424242"></div>
<div class="a" style="left:988.500px;top:350px;width:25.500px;height:22px;background:#474747"></div>
<div class="a" style="left:1050.500px;top:350px;width:45.500px;height:22px;background:#474747"></div>
<div class="a" style="left:1015px;top:349px;width:35px;height:23px;background:#535353"></div>
<span class="t b" style="left: 994.3px; top: 354.3px; font-size: 9.5px; color: rgb(196, 196, 196); transform: scaleX(0.8802);">3D</span>
<span class="t b" style="left: 1021px; top: 354.3px; font-size: 9.5px; color: rgb(244, 244, 244); transform: scaleX(0.7604);">Layers</span>
<span class="t b" style="left: 1057.6px; top: 354.3px; font-size: 9.5px; color: rgb(196, 196, 196); transform: scaleX(0.781);">Channels</span>
<svg style="left:1189.300px;top:357.700px" width="6.500" height="5" viewBox="0 0 6.500 5" stroke="#b4b4b4" stroke-width="1.100"><path d="M0 0.600H6.500M0 2.500H6.500M0 4.400H6.500"></path></svg>
<div class="fld" style="left:993px;top:379.500px;width:64.500px;height:13.500px"></div>
<svg style="left:996px;top:382px" width="9" height="9" viewBox="0 0 9 9" fill="none" stroke="#e0e0e0" stroke-width="1.200"><circle cx="3.600" cy="3.600" r="2.800"></circle><path d="M5.800 5.800L8.300 8.300"></path></svg>
<span class="t" style="left: 1007.6px; top: 380.4px; font-size: 9.5px; color: rgb(228, 228, 228); transform: scaleX(0.8046);">Kind</span>
<svg style="left:1049px;top:385px" width="6" height="4" viewBox="0 0 6 4" fill="none" stroke="#a5a5a5" stroke-width="1"><path d="M0.500 0.500L3 3L5.500 0.500"></path></svg>
<svg style="left:0;top:0" width="1200" height="649" viewBox="0 0 1200 649" fill="none" stroke="#dcdcdc" stroke-width="1.100">
<rect x="1068.500" y="382.500" width="9" height="7.500"></rect><path d="M1069.500 389L1072 385.500L1074 388L1075.200 386.800L1077 389Z" fill="#dcdcdc" stroke="none"></path>
<circle cx="1091" cy="386.300" r="4"></circle><path d="M1091 382.300A4 4 0 0 1 1091 390.300Z" fill="#dcdcdc" stroke="none"></path>
<path d="M1106.500 384V382.500H1113.500V384M1110 382.500V390M1108.500 390H1111.500" stroke-width="1.300"></path>
<rect x="1125" y="383" width="7" height="6.500"></rect><g fill="#dcdcdc" stroke="none"><rect x="1123.500" y="381.500" width="2.600" height="2.600"></rect><rect x="1130.700" y="381.500" width="2.600" height="2.600"></rect><rect x="1123.500" y="388.300" width="2.600" height="2.600"></rect><rect x="1130.700" y="388.300" width="2.600" height="2.600"></rect></g>
<path d="M1144.500 382.500H1148.500L1151 385V390.500H1144.500Z" fill="#dcdcdc" stroke-width="0.800"></path><rect x="1147.500" y="386.500" width="4.500" height="4.500" fill="#535353" stroke-width="0.900"></rect>
<rect x="1162.500" y="380.500" width="5" height="11.500" rx="2.500" fill="#3c3c3c" stroke="none"></rect><circle cx="1165" cy="383.200" r="2.700" fill="#f0f0f0" stroke="none"></circle>
</svg>
<div class="fld" style="left:993px;top:402px;width:96.500px;height:13px;background:#4d4d4d"></div>
<span class="t" style="left: 997.6px; top: 402.3px; font-size: 9.5px; color: rgb(115, 115, 115); transform: scaleX(0.7935);">Normal</span>
<svg style="left:1081px;top:407px" width="6" height="4" viewBox="0 0 6 4" fill="none" stroke="#666" stroke-width="1"><path d="M0.500 0.500L3 3L5.500 0.500"></path></svg>
<span class="t" style="left: 1096.7px; top: 402.3px; font-size: 9.5px; color: rgb(115, 115, 115); transform: scaleX(0.8176);">Opacity:</span>
<div class="fld" style="left:1128.500px;top:402px;width:27px;height:13px;background:#484848"></div>
<span class="t" style="left: 1132px; top: 402.3px; font-size: 9.5px; color: rgb(124, 124, 124); transform: scaleX(0.7815);">100%</span>
<div class="fld" style="left:1157px;top:402px;width:10px;height:13px;background:#4d4d4d"></div>
<svg style="left:1159px;top:407px" width="6" height="4" viewBox="0 0 6 4" fill="none" stroke="#666" stroke-width="1"><path d="M0.500 0.500L3 3L5.500 0.500"></path></svg>
<span class="t" style="left: 992.9px; top: 423.6px; font-size: 9.5px; color: rgb(115, 115, 115); transform: scaleX(0.7923);">Lock:</span>
<svg style="left:0;top:0" width="1200" height="649" viewBox="0 0 1200 649" fill="none" stroke="#c2c2c2" stroke-width="1">
<rect x="1018.500" y="425" width="9" height="9"></rect><g fill="#c2c2c2" stroke="none"><rect x="1020" y="426.500" width="2" height="2"></rect><rect x="1024" y="426.500" width="2" height="2"></rect><rect x="1022" y="428.500" width="2" height="2"></rect><rect x="1020" y="430.500" width="2" height="2"></rect><rect x="1024" y="430.500" width="2" height="2"></rect></g>
<path d="M1044.500 424.500L1039.500 430.500" stroke-width="2"></path><path d="M1039 431C1037.800 431.300 1037.300 433 1036.300 434.300C1038.500 434.600 1040 433.800 1040.500 432Z" fill="#c2c2c2" stroke-width="0.500"></path>
<path d="M1057 424L1058.800 426.200H1057.600V428.900H1060.300V427.700L1062.500 429.500L1060.300 431.300V430.100H1057.600V432.800H1058.800L1057 435L1055.200 432.800H1056.400V430.100H1053.700V431.300L1051.500 429.500L1053.700 427.700V428.900H1056.400V426.200H1055.200Z" fill="#c2c2c2" stroke="none"></path>
<path d="M1069.500 426.500H1078.500V433.500H1072M1069.500 426.500V430.500" stroke-dasharray="1.500 1"></path><path d="M1071 424.500V433.500H1080" stroke-width="0.900"></path>
<rect x="1087.500" y="429" width="8" height="6" fill="#c2c2c2" stroke="none"></rect><path d="M1089.300 429V427C1089.300 424 1093.700 424 1093.700 427V429" stroke-width="1.200"></path>
</svg>
<span class="t" style="left: 1113.3px; top: 423.6px; font-size: 9.5px; color: rgb(115, 115, 115); transform: scaleX(0.8795);">Fill:</span>
<div class="fld" style="left:1128.500px;top:423px;width:27px;height:13px;background:#484848"></div>
<span class="t" style="left: 1132px; top: 423.6px; font-size: 9.5px; color: rgb(124, 124, 124); transform: scaleX(0.7815);">100%</span>
<div class="fld" style="left:1157px;top:423px;width:10px;height:13px;background:#4d4d4d"></div>
<svg style="left:1159px;top:428px" width="6" height="4" viewBox="0 0 6 4" fill="none" stroke="#666" stroke-width="1"><path d="M0.500 0.500L3 3L5.500 0.500"></path></svg>
<div class="a" style="left:988px;top:441px;width:212px;height:183px;background:#4c4c4c"></div>
<div class="a" style="left:988px;top:441px;width:199px;height:122px;background:#535353"></div>
<div class="sep" style="left:988px;top:418px;width:212px;background:#4a4a4a"></div>
<div class="sep" style="left:988px;top:440px;width:212px;background:#454545"></div>
<div class="sep" style="left:988px;top:462px;width:199px;background:#4a4a4a"></div>
<svg style="left:994px;top:448px" width="11" height="8" viewBox="0 0 11 8"><path d="M0.300 4C2.500 -0.300 8.500 -0.300 10.700 4C8.500 8.300 2.500 8.300 0.300 4Z" fill="#e6e6e6"></path><circle cx="5.500" cy="4" r="2.100" fill="#4a4a4a"></circle><circle cx="5.500" cy="4" r="0.900" fill="#e6e6e6"></circle></svg>
<svg style="left:1013.500px;top:449.9px" width="7" height="4" viewBox="0 0 7 4" fill="none" stroke="#bdbdbd" stroke-width="1"><path d="M0.500 0.500L3.500 3.500L6.500 0.500"></path></svg>
<svg style="left:1024px;top:446.9px" width="11.500" height="9.200" viewBox="0 0 13 10" preserveAspectRatio="none"><path d="M0.500 0.500H4.500L5.500 2H12.500V9.500H0.500Z" fill="none" stroke="#e2e2e2" stroke-width="1"></path><path d="M0.500 4H12.500V9.500H0.500Z" fill="#e2e2e2"></path></svg>
<span class="t" style="left: 1044.8px; top: 446.2px; font-size: 9.5px; color: rgb(224, 224, 224); transform: scaleX(0.8331);">Image</span>
<div class="sep" style="left:988px;top:482px;width:199px;background:#4a4a4a"></div>
<svg style="left:994px;top:468px" width="11" height="8" viewBox="0 0 11 8"><path d="M0.300 4C2.500 -0.300 8.500 -0.300 10.700 4C8.500 8.300 2.500 8.300 0.300 4Z" fill="#e6e6e6"></path><circle cx="5.500" cy="4" r="2.100" fill="#4a4a4a"></circle><circle cx="5.500" cy="4" r="0.900" fill="#e6e6e6"></circle></svg>
<div class="a" style="left:1027.500px;top:464.4px;width:24px;height:16px;background:#3a3a3a;border:1px solid #5e5e5e"></div>
<div class="a" style="left:1031.500px;top:467.4px;width:11px;height:9px;background:#f2f2f2"></div>
<svg style="left:1043px;top:471.4px" width="7" height="8" viewBox="0 0 7 8"><path d="M0.500 0.500H4.500L6.500 2.500V7.500H0.500Z" fill="#e8e8e8"></path><rect x="2.500" y="3.500" width="3" height="3" fill="#3a3a3a"></rect></svg>
<span class="t" style="left: 1059.5px; top: 466.7px; font-size: 9.5px; color: rgb(224, 224, 224); transform: scaleX(0.8466);">change image1</span>
<div class="sep" style="left:988px;top:503px;width:199px;background:#4a4a4a"></div>
<svg style="left:994px;top:489px" width="11" height="8" viewBox="0 0 11 8"><path d="M0.300 4C2.500 -0.300 8.500 -0.300 10.700 4C8.500 8.300 2.500 8.300 0.300 4Z" fill="#e6e6e6"></path><circle cx="5.500" cy="4" r="2.100" fill="#4a4a4a"></circle><circle cx="5.500" cy="4" r="0.900" fill="#e6e6e6"></circle></svg>
<svg style="left:1015.500px;top:489.4px" width="4" height="7" viewBox="0 0 4 7" fill="none" stroke="#bdbdbd" stroke-width="1"><path d="M0.500 0.500L3.500 3.500L0.500 6.500"></path></svg>
<svg style="left:1024px;top:487.9px" width="11.500" height="9.200" viewBox="0 0 13 10" preserveAspectRatio="none"><path d="M0.500 0.500H4.500L5.500 2H12.500V9.500H0.500Z" fill="#e2e2e2" stroke="#e2e2e2" stroke-width="1"></path></svg>
<span class="t" style="left: 1044.8px; top: 487.2px; font-size: 9.5px; color: rgb(224, 224, 224); transform: scaleX(0.8383);">icons</span>
<div class="sep" style="left:988px;top:523px;width:199px;background:#4a4a4a"></div>
<svg style="left:994px;top:509px" width="11" height="8" viewBox="0 0 11 8"><path d="M0.300 4C2.500 -0.300 8.500 -0.300 10.700 4C8.500 8.300 2.500 8.300 0.300 4Z" fill="#e6e6e6"></path><circle cx="5.500" cy="4" r="2.100" fill="#4a4a4a"></circle><circle cx="5.500" cy="4" r="0.900" fill="#e6e6e6"></circle></svg>
<svg style="left:1015.500px;top:509.4px" width="4" height="7" viewBox="0 0 4 7" fill="none" stroke="#bdbdbd" stroke-width="1"><path d="M0.500 0.500L3.500 3.500L0.500 6.500"></path></svg>
<svg style="left:1024px;top:507.9px" width="11.500" height="9.200" viewBox="0 0 13 10" preserveAspectRatio="none"><path d="M0.500 0.500H4.500L5.500 2H12.500V9.500H0.500Z" fill="#e2e2e2" stroke="#e2e2e2" stroke-width="1"></path></svg>
<span class="t" style="left: 1044.8px; top: 507.2px; font-size: 9.5px; color: rgb(224, 224, 224); transform: scaleX(0.8816);">text</span>
<div class="sep" style="left:988px;top:542px;width:199px;background:#4a4a4a"></div>
<svg style="left:994px;top:528px" width="11" height="8" viewBox="0 0 11 8"><path d="M0.300 4C2.500 -0.300 8.500 -0.300 10.700 4C8.500 8.300 2.500 8.300 0.300 4Z" fill="#e6e6e6"></path><circle cx="5.500" cy="4" r="2.100" fill="#4a4a4a"></circle><circle cx="5.500" cy="4" r="0.900" fill="#e6e6e6"></circle></svg>
<svg style="left:1015.500px;top:528.9px" width="4" height="7" viewBox="0 0 4 7" fill="none" stroke="#bdbdbd" stroke-width="1"><path d="M0.500 0.500L3.500 3.500L0.500 6.500"></path></svg>
<svg style="left:1024px;top:527.4px" width="11.500" height="9.200" viewBox="0 0 13 10" preserveAspectRatio="none"><path d="M0.500 0.500H4.500L5.500 2H12.500V9.500H0.500Z" fill="#e2e2e2" stroke="#e2e2e2" stroke-width="1"></path></svg>
<span class="t" style="left: 1044.8px; top: 526.7px; font-size: 9.5px; color: rgb(224, 224, 224); transform: scaleX(0.8357);">design</span>
<div class="sep" style="left:988px;top:562px;width:199px;background:#4a4a4a"></div>
<svg style="left:994px;top:548px" width="11" height="8" viewBox="0 0 11 8"><path d="M0.300 4C2.500 -0.300 8.500 -0.300 10.700 4C8.500 8.300 2.500 8.300 0.300 4Z" fill="#e6e6e6"></path><circle cx="5.500" cy="4" r="2.100" fill="#4a4a4a"></circle><circle cx="5.500" cy="4" r="0.900" fill="#e6e6e6"></circle></svg>
<svg style="left:1015.500px;top:548.4px" width="4" height="7" viewBox="0 0 4 7" fill="none" stroke="#bdbdbd" stroke-width="1"><path d="M0.500 0.500L3.500 3.500L0.500 6.500"></path></svg>
<svg style="left:1024px;top:546.9px" width="11.500" height="9.200" viewBox="0 0 13 10" preserveAspectRatio="none"><path d="M0.500 0.500H4.500L5.500 2H12.500V9.500H0.500Z" fill="#e2e2e2" stroke="#e2e2e2" stroke-width="1"></path></svg>
<span class="t" style="left: 1044.8px; top: 546.2px; font-size: 9.5px; color: rgb(224, 224, 224); transform: scaleX(0.7281);">BG</span>
<div class="a" style="left:1011px;top:441px;width:1px;height:121px;background:#4a4a4a"></div>
<svg style="left:1165px;top:546px" width="9" height="11" viewBox="0 0 9 11"><rect x="0" y="4.500" width="9" height="6.500" rx="0.800" fill="#e6e6e6"></rect><path d="M2.200 4.500V3C2.200 0 6.800 0 6.800 3V4.500" fill="none" stroke="#e6e6e6" stroke-width="1.300"></path><circle cx="4.500" cy="7.500" r="1" fill="#535353"></circle></svg>
<div class="a" style="left:988px;top:624px;width:212px;height:18px;background:#535353;border-top:1px solid #484848"></div>
<svg style="left:0;top:0" width="1200" height="649" viewBox="0 0 1200 649" fill="none" stroke="#9a9a9a" stroke-width="1.100">
<rect x="1040" y="630.500" width="6.500" height="4.500" rx="2.200"></rect><rect x="1045" y="630.500" width="6.500" height="4.500" rx="2.200"></rect>
<rect x="1083" y="628.500" width="10" height="8" fill="#dcdcdc" stroke="#dcdcdc"></rect><circle cx="1088" cy="632.500" r="2.300" fill="#535353" stroke="none"></circle>
<circle cx="1109.500" cy="632.500" r="4.500" stroke="#dcdcdc"></circle><path d="M1106.300 635.700A4.500 4.500 0 0 1 1112.700 629.300Z" fill="#dcdcdc" stroke="none"></path><rect x="1114" y="637" width="1.500" height="1.500" fill="#dcdcdc" stroke="none"></rect>
<path d="M1125 628.500H1129L1130 630H1136V637H1125Z" fill="#dcdcdc" stroke="#dcdcdc" stroke-width="0.800"></path>
<rect x="1147" y="628" width="9" height="9" stroke="#dcdcdc" stroke-width="1.200"></rect><path d="M1151.500 630.200V634.800M1149.200 632.500H1153.800" stroke="#dcdcdc" stroke-width="1.200"></path>
<path d="M1168.500 629.500H1177.500M1171.500 629.500V628H1174.500V629.500M1169.500 630V637.500H1176.500V630M1171.700 631.500V636M1174.300 631.500V636" stroke="#7d7d7d" stroke-width="1"></path>
</svg>
<span class="t" style="left: 1063.5px; top: 626.6px; font-size: 11px; color: rgb(143, 143, 143); font-style: italic; font-family: &quot;Liberation Serif&quot;, serif; transform: scaleX(1.0688);">fx</span>
</div>
<!-- TASKBAR -->
<div id="taskbar" class="a">
<div class="a" style="left:37.500px;top:1.500px;width:268.500px;height:6px;background:#f1f1f1"></div>
<div class="a" style="left:503px;top:1.500px;width:37px;height:6px;background:#4c5c63"></div>
<div class="a" style="left:1121px;top:4.500px;width:18px;height:3px;background:#9aa4a9;opacity:.7"></div>
</div>


</body></html>
